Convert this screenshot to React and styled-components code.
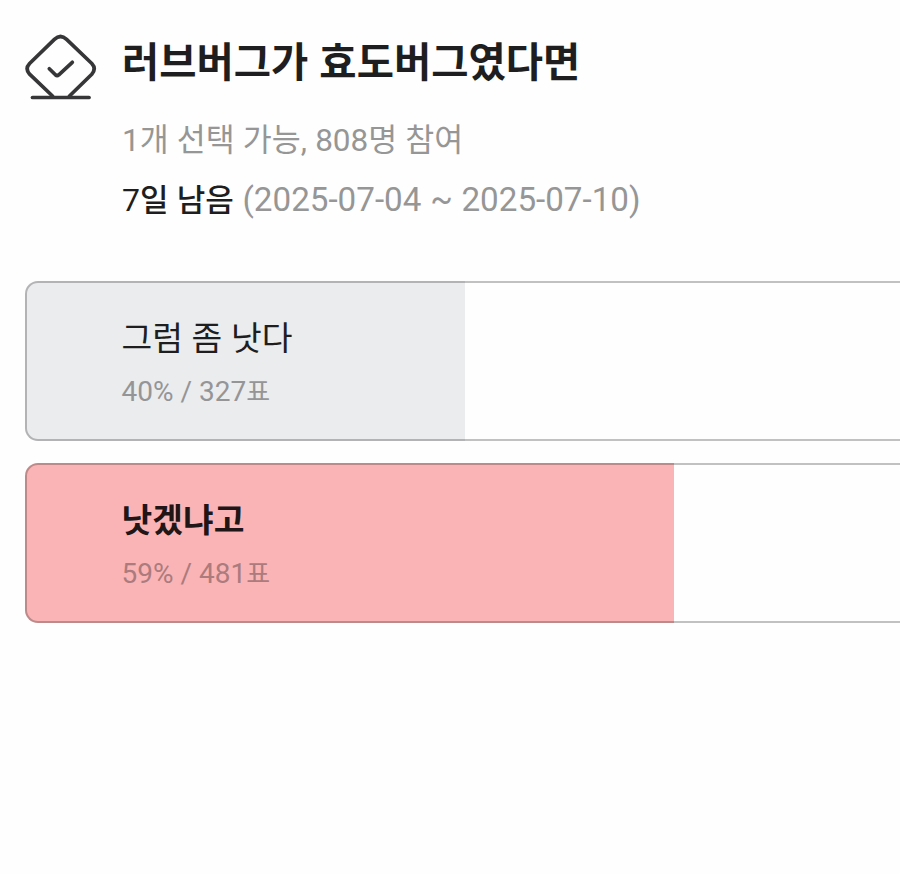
import styled, { createGlobalStyle } from "styled-components"

const poll = {
  title: "러브버그가 효도버그였다면",
  info: "1개 선택 가능, 808명 참여",
  days: 7,
  period: "(2025-07-04 ~ 2025-07-10)",
}

const options = [
  { id: 1, label: "그럼 좀 낫다", percent: 40, votes: 327, picked: false },
  { id: 2, label: "낫겠냐고", percent: 59, votes: 481, picked: true },
]

const GlobalStyle = createGlobalStyle`
  * {
    box-sizing: border-box;
  }

  body {
    margin: 0;
    background: #fefefe;
    color: #1e1e20;
    font-family: Roboto, "Noto Sans CJK KR", sans-serif;
    overflow: hidden;
  }
`

// Ballot paper dropping into a slot
const BallotIcon = () => {
  return (
    <IconSvg viewBox="0 0 72 68" fill="none">
      <path d="M27.5 63 L4.6 41.2 Q-.3 35.8 4.6 30.5 L29.4 6.4 Q35.5 .6 41.6 6.4 L66.8 30.5 Q71.6 35.8 66.8 41.2 L44.5 63" />
      <path d="M7.5 64.5 H64" />
      <path d="M24.3 35.7 L30.4 41.8 Q32.1 43.2 33.8 41.8 L47.3 29.3" />
    </IconSvg>
  )
}

const IconSvg = styled.svg`
  flex: none;
  width: 72px;
  height: 68px;
  stroke: #363638;
  stroke-width: 3.7;
  stroke-linecap: round;
  stroke-linejoin: round;
`

// Poll option component
const Option = ({ label, percent, votes, picked }) => {
  return (
    <OptionWrapper $percent={percent} $picked={picked}>
      <OptionLabel $picked={picked}>{label}</OptionLabel>
      <OptionResult $picked={picked}>
        {percent}% / {votes}<Unit>표</Unit>
      </OptionResult>
    </OptionWrapper>
  )
}

const OptionWrapper = styled.li`
  height: 160px;
  padding: 31px 0 0 94.5px;
  border: 2px solid rgba(0, 0, 0, 0.24);
  border-radius: 13px;
  background: linear-gradient(${(props) => (props.$picked ? "#fab4b5, #fab4b5" : "#ebecee, #ebecee")})
    border-box 0 0 / ${(props) => props.$percent}% 100% no-repeat;
`

const OptionLabel = styled.div`
  height: 50px;
  font-size: 33.4px;
  line-height: 50px;
  font-weight: ${(props) => (props.$picked ? 700 : 400)};
  word-spacing: 0.4px;
  color: ${(props) => (props.$picked ? "#201517" : "#1e1e20")};
`

const OptionResult = styled.div`
  margin-top: 8px;
  font-size: 28px;
  line-height: 40px;
  color: ${(props) => (props.$picked ? "#ab7b7d" : "#959597")};
`

const Unit = styled.span`
  font-size: 26px;
`

const Page = styled.main`
  height: 874px;
  padding: 33px 0 0 25px;
  overflow: hidden;
`

const Header = styled.header`
  display: flex;
  gap: 25px;
  height: 248px;
`

const HeaderText = styled.div`
  display: flex;
  flex-direction: column;
  padding-top: 2px;
`

const Title = styled.h1`
  margin: 0;
  font-size: 40.5px;
  line-height: 56px;
  font-weight: 700;
  word-spacing: 1px;
`

const Info = styled.p`
  margin: 22px 0 0;
  font-size: 31.5px;
  line-height: 56px;
  word-spacing: 0.3px;
  color: #969696;
`

const Period = styled.p`
  margin: 3px 0 0;
  font-size: 33.2px;
  line-height: 56px;
  word-spacing: 0.5px;
  color: #969696;
`

const Remaining = styled.span`
  font-size: 31px;
  font-weight: 500;
  color: #1e1e20;
`

const Days = styled.span`
  font-size: 32px;
  font-weight: 400;
`

// The list runs past the right edge of the screen
const OptionList = styled.ul`
  display: flex;
  flex-direction: column;
  gap: 22px;
  width: 1100px;
  margin: 0;
  padding: 0;
  list-style: none;
`

const App = () => {
  return (
    <Page>
      <GlobalStyle />
      <Header>
        <BallotIcon />
        <HeaderText>
          <Title>{poll.title}</Title>
          <Info>{poll.info}</Info>
          <Period>
            <Remaining>
              <Days>{poll.days}</Days>일 남음
            </Remaining>{" "}
            {poll.period}
          </Period>
        </HeaderText>
      </Header>
      <OptionList>
        {options.map((option) => (
          <Option key={option.id} {...option} />
        ))}
      </OptionList>
    </Page>
  )
}

export default App
